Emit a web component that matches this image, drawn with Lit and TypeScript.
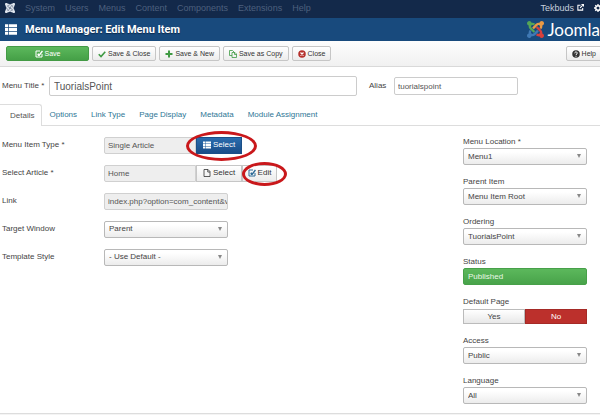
import { LitElement, html, svg, css, nothing } from "lit";
import { customElement, property } from "lit/decorators.js";

const knot = "M16.719 14.759L14.22 17.26l-2.37 2.37-.462.466c-1.368 1.365-3.297 1.83-5.047 1.397-.327 1.424-1.604 2.49-3.13 2.49C1.438 23.983 0 22.547 0 20.772c0-1.518 1.055-2.789 2.469-3.123-.446-1.76.016-3.705 1.396-5.08l.179-.18 2.37 2.37-.184.181c-.769.779-.769 2.024 0 2.789.771.78 2.022.78 2.787.015l.465-.465 2.37-2.371 2.502-2.506z";

const joomla = (colors: string[]) =>
  colors.map((c, i) => svg`<path fill=${c} transform="rotate(${i * 90} 12 12)" d=${knot} />`);

const icons: Record<string, unknown> = {
  joomla: svg`<g transform="scale(.667)" stroke="#dfe5ee">${joomla(["#dfe5ee", "#dfe5ee", "#dfe5ee", "#dfe5ee"])}</g>`,
  logo: svg`<g transform="scale(.667)">${joomla(["#3f79b4", "#55a556", "#ea9a45", "#d8403c"])}</g>`,
  list: svg`<path fill="currentColor" d="M0 1h4v4H0zM5 1h11v4H5zM0 6h4v4H0zM5 6h11v4H5zM0 11h4v4H0zM5 11h11v4H5z"/>`,
  edit: svg`<path fill="none" stroke="currentColor" stroke-width="2" d="M14 8v6H2V2h8"/><path fill="currentColor" d="M4.500 8.500l2.200-2.200 1.800 1.800L13.800 1 16 3.200 9 12H6z"/>`,
  check: svg`<path fill="none" stroke="currentColor" stroke-width="3.200" d="M1.500 8.500l4.500 4.500L14.500 3.500"/>`,
  plus: svg`<path fill="currentColor" d="M6 1h4v5h5v4h-5v5H6v-5H1V6h5z"/>`,
  copy: svg`<g fill="none" stroke="currentColor" stroke-width="1.600"><path d="M6 11H1V1h6l3 3"/><path d="M6 5h6l3 3v7H6zM11 5v4h4"/></g>`,
  close: svg`<circle cx="8" cy="8" r="7.500" fill="currentColor"/><path stroke="#fff" stroke-width="2.400" d="M5 5l6 6M11 5l-6 6"/>`,
  help: svg`<circle cx="8" cy="8" r="7.500" fill="currentColor"/><path fill="none" stroke="#fff" stroke-width="2" d="M5.500 6.500C5.500 3 10.500 3 10.500 6.200 10.500 8 8 8 8 10M8 11.500v2"/>`,
  file: svg`<path fill="none" stroke="currentColor" stroke-width="1.600" d="M2 1h8l4 4v10H2zM9.500 1v5H14"/>`,
  out: svg`<path fill="none" stroke="currentColor" stroke-width="2.400" d="M8 3H2v11h11V9M7 9l6-6"/><path fill="currentColor" d="M9 0h7v7z"/>`,
  gear: svg`<circle cx="8" cy="8" r="4.500" fill="none" stroke="currentColor" stroke-width="3"/><path stroke="currentColor" stroke-width="2.600" d="M8 0v3M8 13v3M0 8h3M13 8h3M2.500 2.500l2 2M11.500 11.500l2 2M13.500 2.500l-2 2M4.500 11.500l-2 2"/>`,
};

@customElement("ui-icon")
class UiIcon extends LitElement {
  @property() name = "";
  static styles = css`
    :host { display: inline-flex; flex: none; width: 8px; height: 8px; }
    svg { width: 100%; height: 100%; display: block; }
  `;
  render() {
    return html`<svg viewBox="0 0 16 16" aria-hidden="true">${icons[this.name] ?? nothing}</svg>`;
  }
}

@customElement("app-root")
class AppRoot extends LitElement {
  static styles = css`
    :host {
      display: block;
      overflow: hidden;
      background: #fff;
      color: #444;
      font: 8px/12px "Liberation Sans", Arial, sans-serif;
    }
    * { box-sizing: border-box; }
    a { text-decoration: none; color: inherit; }
    button, input, select { font: inherit; color: inherit; margin: 0; border-radius: 2px; }

    .bleed { width: calc(100% + 12px); display: flex; align-items: center; }
    .push { margin-left: auto; }

    .nav {
      height: 18px;
      padding: 0 10px 3px 5px;
      gap: 10px;
      background: #13294a;
      color: #4d607e;
      font-size: 9px;
    }
    .brand { display: flex; }
    .brand ui-icon { width: 10px; height: 10px; }
    .site { display: flex; align-items: center; gap: 3px; color: #c6cfdc; }
    .site ui-icon { width: 7px; height: 7px; color: #fff; }
    .gear { display: flex; color: #fff; }

    .header { height: 23px; padding: 0 12px 0 5px; gap: 8px; background: #184a7d; color: #fff; }
    .header ui-icon { width: 12px; height: 13px; }
    h1 { margin: 0; font: 700 11px/16px Roboto, sans-serif; text-shadow: 0 1px 1px #0b2a4d; }
    .logo { display: flex; align-items: center; gap: 3px; font: 17px/20px Lato, sans-serif; }
    .header .logo ui-icon { width: 17px; height: 17px; }

    .toolbar {
      height: 26px;
      padding: 0 10px 0 6px;
      gap: 3px;
      background: linear-gradient(#fdfdfd, #f1f1f1);
      border-bottom: 1px solid #d9d9d9;
    }
    .btn {
      display: inline-flex;
      align-items: center;
      justify-content: center;
      gap: 2px;
      height: 15px;
      padding: 0 5px;
      border: 1px solid #c6c6c6;
      background: linear-gradient(#fff, #ececec);
      color: #333;
      white-space: nowrap;
    }
    .toolbar .btn { font-size: 7px; }
    .toolbar .save { width: 83px; background: linear-gradient(#5cb85c, #45a047); border-color: #439a45; color: #fff; }
    .green { color: #3f9a43; }
    .red { color: #b5302c; }
    .blue { color: #2c6a96; }

    .titles { display: flex; align-items: center; padding: 9px 0 8px 2px; }
    .text { width: 124px; height: 18px; padding: 0 0 0 3px; border: 1px solid #ccc; background: #fff; color: #555; }
    .titles label { width: 47px; }
    .titles .title { width: 308px; height: 20px; padding: 0 4px; font-size: 10px; }
    .titles .alias-label { width: 25px; margin-left: 12px; }

    .tabs { display: flex; height: 22px; border-bottom: 1px solid #ddd; }
    .tabs a {
      display: flex;
      align-items: center;
      height: 22px;
      padding: 0 7px;
      color: #2f7796;
    }
    .tabs .active { padding: 0 7px 0 10px; border: 1px solid #ddd; border-left: 0; border-bottom: 0; border-radius: 0 3px 0 0; background: #fff; color: #555; }

    .body { display: flex; justify-content: space-between; padding: 10px 13px 9px 2px; }
    .rows { display: grid; gap: 10px; align-content: start; }
    .row { display: flex; align-items: center; height: 18px; }
    .row > label { width: 102px; }
    .group { display: flex; align-items: center; }
    .group .text { width: 92px; border-radius: 2px 0 0 2px; }
    .row .text { height: 17px; background: #eee; border-color: #d0d0d0; }
    .group .btn { height: 17px; border-radius: 0; width: 46px; padding: 0; }
    .group .edit { width: 35px; }
    .group .primary { border-color: #1a4f88; background: linear-gradient(#2a6cae, #1a4d88); color: #fff; }
    .mark { position: relative; display: flex; }
    .mark::after {
      content: "";
      position: absolute;
      inset: -6px -15px -7px -10px;
      border: 3px solid #c9181b;
      border-radius: 50%;
      pointer-events: none;
    }
    .mark.small::after { inset: -3px -10px -4px 0; }

    .drop { position: relative; display: block; width: 124px; }
    .drop select {
      display: block;
      appearance: none;
      width: 100%;
      height: 17px;
      padding: 0 12px 0 4px;
      border: 1px solid #b8b8b8;
      background: linear-gradient(#fff 20%, #ececec);
      color: #444;
    }
    .drop::after {
      content: "";
      position: absolute;
      right: 6px;
      top: 6px;
      border: 2px solid transparent;
      border-top: 4px solid #888;
      border-bottom: 0;
    }
    .drop.on select { background: linear-gradient(#5cb85c, #48a34a); border-color: #47a049; color: #e9f8e6; }
    .drop.on::after { display: none; }

    .side { display: grid; gap: 11px; width: 124px; align-content: start; }
    .field { display: grid; }
    .field > label, .legend { height: 12px; }
    .switch { display: flex; padding-top: 1px; }
    .switch label {
      flex: 1;
      height: 15px;
      line-height: 13px;
      text-align: center;
      border: 1px solid #bbb;
      background: linear-gradient(#fff, #e8e8e8);
    }
    .switch .no { background: #bc302c; border-color: #a52a26; color: #fff; }
    .switch input { position: absolute; opacity: 0; pointer-events: none; }
    footer { height: 3px; border-top: 1px solid #ddd; background: #f4f4f4; }
  `;

  private button(icon: string, tone: string, label: string, extra = "") {
    return html`<button type="button" class="btn ${extra}"><ui-icon class=${tone} name=${icon}></ui-icon>${label}</button>`;
  }

  private drop(id: string, value: string, extra = "") {
    return html`<span class="drop ${extra}"><select id=${id}><option>${value}</option></select></span>`;
  }

  private sideField(id: string, label: string, value: string, extra = "") {
    return html`<div class="field"><label for=${id}>${label}</label>${this.drop(id, value, extra)}</div>`;
  }

  render() {
    return html`
      <nav class="nav bleed">
        <a class="brand" href="#" aria-label="Joomla"><ui-icon name="joomla"></ui-icon></a>
        ${["System", "Users", "Menus", "Content", "Components", "Extensions", "Help"].map((t) => html`<a href="#">${t}</a>`)}
        <a class="site push" href="#">Tekbuds <ui-icon name="out"></ui-icon></a>
        <a class="gear" href="#" aria-label="Settings"><ui-icon name="gear"></ui-icon></a>
      </nav>
      <header class="header bleed">
        <ui-icon name="list"></ui-icon>
        <h1>Menu Manager: Edit Menu Item</h1>
        <div class="logo push"><ui-icon name="logo"></ui-icon><span>Joomla</span></div>
      </header>
      <div class="toolbar bleed">
        ${this.button("edit", "", "Save", "save")}
        ${this.button("check", "green", "Save & Close")}
        ${this.button("plus", "green", "Save & New")}
        ${this.button("copy", "green", "Save as Copy")}
        ${this.button("close", "red", "Close")}
        ${this.button("help", "", "Help", "push")}
      </div>

      <div class="titles">
        <label for="title">Menu Title *</label>
        <input id="title" class="text title" .value=${"TuorialsPoint"} />
        <label class="alias-label" for="alias">Alias</label>
        <input id="alias" class="text" .value=${"tuorialspoint"} />
      </div>
      <nav class="tabs">
        ${["Details", "Options", "Link Type", "Page Display", "Metadata", "Module Assignment"].map(
          (t, i) => html`<a href="#" class=${i === 0 ? "active" : ""}>${t}</a>`
        )}
      </nav>

      <main class="body">
        <div class="rows">
          <div class="row"><label for="type">Menu Item Type *</label>
            <div class="group"><input id="type" class="text" readonly .value=${"Single Article"} />
              <span class="mark">${this.button("list", "", "Select", "primary")}</span></div></div>
          <div class="row"><label for="article">Select Article *</label>
            <div class="group"><input id="article" class="text" readonly .value=${"Home"} />
              ${this.button("file", "", "Select")}
              <span class="mark small">${this.button("edit", "blue", "Edit", "edit")}</span></div></div>
          <div class="row"><label for="link">Link</label>
            <input id="link" class="text" readonly .value=${"index.php?option=com_content&v"} /></div>
          <div class="row"><label for="target">Target Window</label>${this.drop("target", "Parent")}</div>
          <div class="row"><label for="style">Template Style</label>${this.drop("style", "- Use Default -")}</div>
        </div>

        <div class="side">
          ${this.sideField("location", "Menu Location *", "Menu1")}
          ${this.sideField("parent", "Parent Item", "Menu Item Root")}
          ${this.sideField("ordering", "Ordering", "TuorialsPoint")}
          ${this.sideField("status", "Status", "Published", "on")}
          <div class="field" role="radiogroup" aria-labelledby="default-page">
            <span class="legend" id="default-page">Default Page</span>
            <div class="switch">
              <input type="radio" name="default" id="yes" /><label for="yes">Yes</label>
              <input type="radio" name="default" id="no" checked /><label class="no" for="no">No</label>
            </div>
          </div>
          ${this.sideField("access", "Access", "Public")}
          ${this.sideField("language", "Language", "All")}
        </div>
      </main>
      <footer></footer>
    `;
  }
}
